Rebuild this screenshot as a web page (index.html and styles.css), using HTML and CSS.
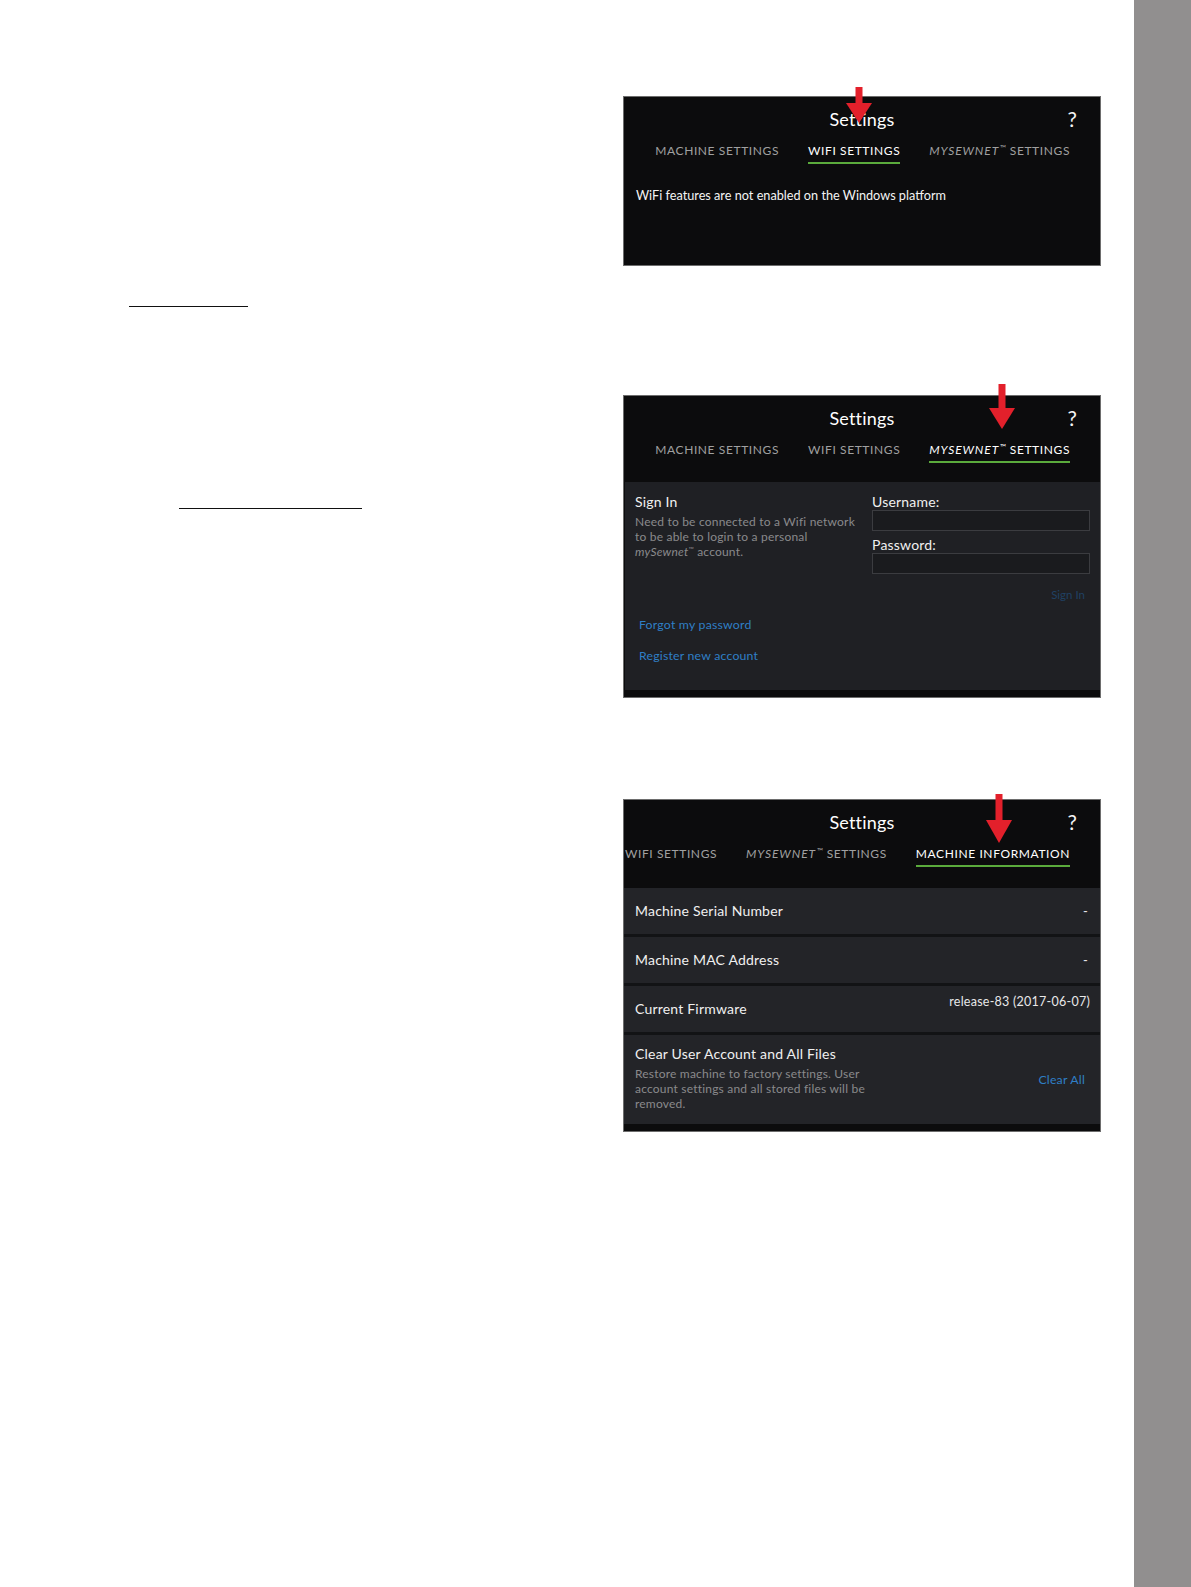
FILE: index.html
```html
<!DOCTYPE html>
<html lang="en">
<head>
<meta charset="utf-8">
<title>Settings</title>
<link rel="stylesheet" href="styles.css">
</head>
<body>
<div class="page">
  <main class="sheet">
    <div class="text-col">
      <span class="blank blank-1"></span>
      <span class="blank blank-2"></span>
    </div>
    <div class="shots">
      <section class="panel panel-wifi">
        <svg class="arrow arrow-1" width="26" height="36" viewBox="0 0 26 36"><rect x="9.5" y="0" width="7" height="18" fill="#e3202b"/><polygon points="0,16 26,16 13,36" fill="#e3202b"/></svg>
        <header class="panel-head">
          <div class="title-row"><span></span><h2 class="title">Settings</h2><span class="help">?</span></div>
          <nav class="tabs">
            <span class="tab">MACHINE SETTINGS</span>
            <span class="tab active">WIFI SETTINGS</span>
            <span class="tab"><i>MYSEWNET</i><sup>™</sup> SETTINGS</span>
          </nav>
        </header>
        <p class="wifi-msg">WiFi features are not enabled on the Windows platform</p>
      </section>

      <section class="panel panel-sewnet">
        <svg class="arrow arrow-2" width="26" height="45" viewBox="0 0 26 45"><rect x="9.5" y="0" width="7" height="26" fill="#e3202b"/><polygon points="0,24 26,24 13,45" fill="#e3202b"/></svg>
        <header class="panel-head">
          <div class="title-row"><span></span><h2 class="title">Settings</h2><span class="help">?</span></div>
          <nav class="tabs">
            <span class="tab">MACHINE SETTINGS</span>
            <span class="tab">WIFI SETTINGS</span>
            <span class="tab active"><i>MYSEWNET</i><sup>™</sup> SETTINGS</span>
          </nav>
        </header>
        <div class="signin">
          <div class="signin-grid">
            <div class="signin-info">
              <h3 class="label">Sign In</h3>
              <p class="desc">Need to be connected to a Wifi network to be able to login to a personal <i>mySewnet</i><sup>™</sup> account.</p>
            </div>
            <div class="signin-form">
              <div class="label">Username:</div>
              <div class="input"></div>
              <div class="label pw">Password:</div>
              <div class="input"></div>
              <div class="signin-btn">Sign In</div>
            </div>
          </div>
          <div class="links">
            <a class="link">Forgot my password</a>
            <a class="link">Register new account</a>
          </div>
        </div>
      </section>

      <section class="panel panel-info">
        <svg class="arrow arrow-3" width="26" height="49" viewBox="0 0 26 49"><rect x="9.5" y="0" width="7" height="28" fill="#e3202b"/><polygon points="0,26 26,26 13,49" fill="#e3202b"/></svg>
        <header class="panel-head">
          <div class="title-row"><span></span><h2 class="title">Settings</h2><span class="help">?</span></div>
          <nav class="tabs">
            <span class="tab">WIFI SETTINGS</span>
            <span class="tab"><i>MYSEWNET</i><sup>™</sup> SETTINGS</span>
            <span class="tab active">MACHINE INFORMATION</span>
          </nav>
        </header>
        <div class="rows">
          <div class="row"><span class="label">Machine Serial Number</span><span class="value">-</span></div>
          <div class="row"><span class="label">Machine MAC Address</span><span class="value">-</span></div>
          <div class="row row-fw"><span class="label">Current Firmware</span><span class="value top">release-83 (2017-06-07)</span></div>
          <div class="row row-clear">
            <div class="clear-info">
              <div class="label">Clear User Account and All Files</div>
              <p class="desc">Restore machine to factory settings. User account settings and all stored files will be removed.</p>
            </div>
            <a class="link clear-link">Clear All</a>
          </div>
        </div>
      </section>
    </div>
  </main>
  <aside class="side-tab"></aside>
</div>
</body>
</html>
```

FILE: styles.css
```css
* { box-sizing: border-box; }
html, body { margin: 0; padding: 0; background: #fff; }
body { font-family: "Lato", "Liberation Sans", sans-serif; }

.page { display: flex; width: 1191px; min-height: 1587px; }
.sheet { flex: 1; display: flex; }
.side-tab { width: 57px; background: #918f8f; }

.text-col { width: 623px; display: flex; flex-direction: column; align-items: flex-start; }
.blank { display: block; height: 1px; background: #111; }
.blank-1 { margin-top: 306px; margin-left: 129px; width: 119px; }
.blank-2 { margin-top: 201px; margin-left: 179px; width: 183px; }

.shots { width: 478px; display: flex; flex-direction: column; }

.panel {
  position: relative;
  width: 478px;
  border: 1px solid #6d6d6d;
  background: #0c0c0d;
  color: #f2f2f2;
}
.panel-wifi { margin-top: 96px; height: 170px; }
.panel-sewnet { margin-top: 129px; height: 303px; padding-bottom: 7px; }
.panel-info { margin-top: 101px; height: 333px; padding-bottom: 7px; }

.arrow { position: absolute; z-index: 2; }
.arrow-1 { left: 222px; top: -10px; }
.arrow-2 { left: 365px; top: -12px; }
.arrow-3 { left: 362px; top: -6px; }

.panel-head { height: 86px; padding-top: 9px; overflow: hidden; }
.panel-info .panel-head { height: 88px; }
.title-row { display: grid; grid-template-columns: 1fr auto 1fr; align-items: center; height: 26px; }
.title { margin: 0; font-size: 18px; font-weight: 400; line-height: 26px; color: #fff; letter-spacing: 0.2px; }
.help { justify-self: end; padding-right: 23px; font-size: 21px; font-weight: 400; line-height: 26px; color: #f4f4f4; }

.tabs { display: flex; justify-content: flex-end; gap: 29px; padding-right: 30px; margin-top: 11px; white-space: nowrap; }
.tab { flex: none; font-size: 12px; line-height: 16px; letter-spacing: 0.6px; color: #a0a0a0; padding-bottom: 3px; border-bottom: 2px solid transparent; }
.tab i { font-style: italic; letter-spacing: 0.9px; }
.tab sup { font-size: 8px; line-height: 0; vertical-align: 4px; letter-spacing: 0; margin-left: 1px; }
.tab.active { color: #fff; border-bottom-color: #5bab3c; }

.wifi-msg { margin: 4px 0 0 12px; font-size: 12.7px; line-height: 16px; color: #f4f4f4; }

.signin { margin: 0 0 0 1px; background: #1f2024; height: 208px; padding: 12px 10px 0 10px; }
.signin-grid { display: grid; grid-template-columns: 237px 1fr; }
.label { margin: 0; font-size: 14px; font-weight: 400; line-height: 16px; color: #f0f0f0; letter-spacing: 0.2px; }
.desc { margin: 4px 0 0; font-size: 12px; line-height: 15px; color: #8a8a8c; letter-spacing: 0.2px; }
.desc sup { font-size: 7px; line-height: 0; vertical-align: 4px; }
.signin-info .desc { width: 226px; }
.input { height: 21px; border: 1px solid #3b3c40; background: #1a1b1e; }
.pw { margin-top: 6px; }
.signin-btn { margin-top: 13px; text-align: right; padding-right: 5px; font-size: 11.5px; line-height: 16px; color: #1f4063; }
.links { display: flex; flex-direction: column; gap: 15px; margin-top: 14px; padding-left: 4px; }
.link { font-size: 12.3px; line-height: 16px; color: #2f7fc6; letter-spacing: 0.2px; }

.rows { display: flex; flex-direction: column; gap: 3px; background: #121315; }
.row { display: flex; justify-content: space-between; align-items: center; height: 46px; background: #232428; padding: 0 12px 0 11px; }
.row .value { font-size: 13px; color: #e8e8e8; letter-spacing: 0.2px; }
.row .value.top { align-self: flex-start; margin-top: 8px; line-height: 16px; margin-right: -2px; font-size: 12.5px; letter-spacing: 0.25px; }
.row-clear { height: 89px; align-items: flex-start; padding-top: 11px; padding-right: 15px; }
.clear-info .desc { width: 240px; }
.clear-link { align-self: center; margin-top: -10px; }
```
